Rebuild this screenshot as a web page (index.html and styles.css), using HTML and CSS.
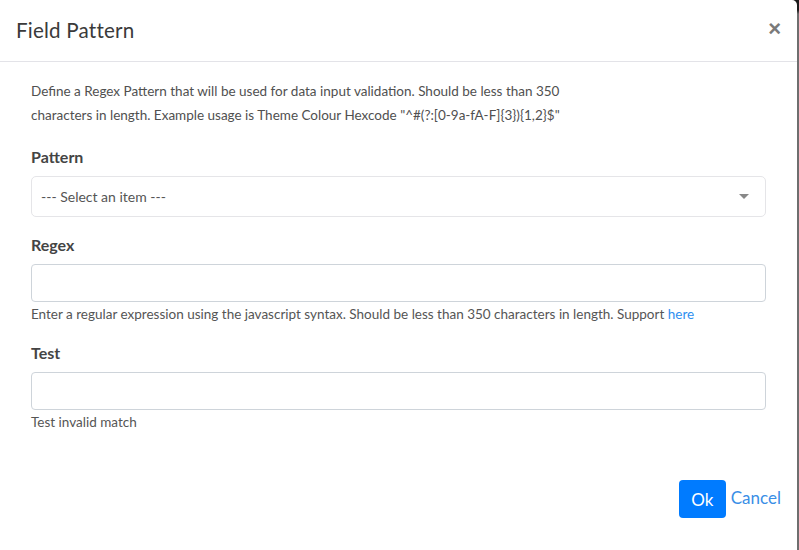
FILE: index.html
```html
<!DOCTYPE html>
<html lang="en">
<head>
    <meta charset="UTF-8">
    <meta name="viewport" content="width=device-width, initial-scale=1.0">
    <title>Field Pattern</title>
    <link rel="stylesheet" href="styles.css">
</head>
<body>
    <div class="modal">
        <div class="modal-header">
            <h4 class="modal-title">Field Pattern</h4>
            <button class="close" type="button">&times;</button>
        </div>

        <div class="modal-body">
            <p class="intro">Define a Regex Pattern that will be used for data input validation. Should be less than 350<br>characters in length. Example usage is Theme Colour Hexcode "^#(?:[0-9a-fA-F]{3}){1,2}$"</p>

            <label for="pattern">Pattern</label>
            <div class="select-box">
                <span>--- Select an item ---</span>
                <span class="caret"></span>
            </div>

            <label for="regex">Regex</label>
            <input type="text" id="regex">
            <small class="help">Enter a regular expression using the javascript syntax. Should be less than 350 characters in length. Support <a href="#">here</a></small>

            <label for="test">Test</label>
            <input type="text" id="test">
            <small class="help">Test invalid match</small>
        </div>

        <!-- Footer -->
        <div class="modal-footer">
            <button class="ok" type="button">Ok</button>
            <a href="#" class="cancel">Cancel</a>
        </div>
    </div>
</body>
</html>
```

FILE: styles.css
```css
/* General Styles */
body {
    margin: 0;
    height: 550px;
    overflow: hidden;
    font-family: 'Lato', 'Noto Sans', sans-serif;
    background: linear-gradient(#1b1b1b 0, #1b1b1b 10px, #6e6e6e 14px);
}

.modal {
    width: 797px;
    height: 550px;
    background-color: #fff;
    border-top-right-radius: 5px;
    display: flex;
    flex-direction: column;
    box-sizing: border-box;
}

.modal-header {
    height: 62px;
    border-bottom: 1px solid #e3e3e8;
    display: flex;
    align-items: center;
    justify-content: space-between;
    padding: 0 16px 0 16px;
    box-sizing: border-box;
}

.modal-title {
    margin: -2px 0 0;
    font-size: 20.6px;
    font-weight: 400;
    color: #3a3a3a;
    letter-spacing: 0.2px;
}

.close {
    border: none;
    background: none;
    font-size: 22px;
    font-weight: bold;
    color: #7a7a7a;
    padding: 0;
    margin-top: -4px;
    cursor: pointer;
    font-family: 'Liberation Sans', sans-serif;
}

.modal-body {
    padding: 17px 31px 0;
    display: flex;
    flex-direction: column;
}

.intro {
    margin: 0 0 20px;
    font-size: 13.5px;
    line-height: 24px;
    color: #505050;
}

label {
    font-size: 16px;
    font-weight: bold;
    color: #444;
    margin-bottom: 10px;
}

.select-box {
    height: 41px;
    border: 1px solid #e5e5e8;
    border-radius: 5px;
    display: flex;
    align-items: center;
    justify-content: space-between;
    padding: 0 16px 0 9px;
    box-sizing: border-box;
    font-size: 14px;
    color: #555;
    margin-bottom: 18px;
}

.caret {
    width: 0;
    height: 0;
    border-left: 5px solid transparent;
    border-right: 5px solid transparent;
    border-top: 5px solid #888;
}

input[type="text"] {
    height: 38px;
    border: 1px solid #ced4da;
    border-radius: 4px;
    box-sizing: border-box;
    margin: 0 0 4px;
}

.help {
    font-size: 13.5px;
    color: #555;
    margin-bottom: 21px;
}

.help a {
    color: #2d8ff0;
    text-decoration: none;
}

.modal-footer {
    margin-top: auto;
    padding: 0 16px 32px 0;
    display: flex;
    justify-content: flex-end;
    align-items: center;
    gap: 5px;
}

.ok {
    width: 47px;
    height: 38px;
    border: none;
    border-radius: 4px;
    background-color: #007bff;
    color: #fff;
    font-family: inherit;
    font-size: 17px;
    cursor: pointer;
}

.cancel {
    color: #3a8ee6;
    font-size: 17px;
    text-decoration: none;
    margin-top: -3px;
}
```
